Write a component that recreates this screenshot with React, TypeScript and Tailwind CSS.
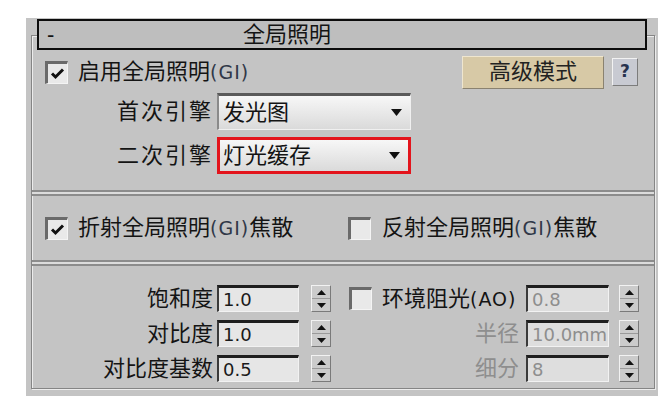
import React from "react";

const cjk = "font-['Liberation_Sans','Noto_Sans_CJK_SC',sans-serif]";
const num = "font-['DejaVu_Sans','Noto_Sans_CJK_SC',sans-serif]";

function CheckBox({ checked }: { checked?: boolean }) {
  return (
    <div className="w-[23px] h-[23px] shrink-0 bg-[#e9e9e9] border-t-[3px] border-l-[3px] border-t-[#6a6a6a] border-l-[#6a6a6a] border-b border-r border-b-[#f4f4f4] border-r-[#f4f4f4] flex items-center justify-center">
      {checked && (
        <svg width="15" height="13" viewBox="0 0 15 13">
          <path d="M2 6.5 L5.5 10 L13 2.5" fill="none" stroke="#111" strokeWidth="3" />
        </svg>
      )}
    </div>
  );
}

function Dropdown({ value, highlight }: { value: string; highlight?: boolean }) {
  return (
    <div
      className={`ml-[4px] w-[194px] h-[37px] flex items-center justify-between bg-gradient-to-b from-[#f7f7f7] to-[#dadada] ${
        highlight
          ? "border-[3px] border-[#e3141c] pl-[3px]"
          : "border-t-[3px] border-l-2 border-t-[#5a5a5a] border-l-[#8a8a8a] border-b border-r border-b-[#f0f0f0] border-r-[#f0f0f0] pl-[4px]"
      } pr-[8px]`}
    >
      <span className="text-[22px] leading-none">{value}</span>
      <svg width="11" height="7" viewBox="0 0 11 7">
        <path d="M0 0 H11 L5.5 7 Z" fill="#111" />
      </svg>
    </div>
  );
}

function Spinner() {
  return (
    <div className="w-[20px] h-[27px] shrink-0 bg-[#cbcbcb] border border-t-[#f2f2f2] border-l-[#f2f2f2] border-b-[#7a7a7a] border-r-[#7a7a7a] flex flex-col">
      <div className="flex-1 flex items-center justify-center border-b border-[#9a9a9a]">
        <svg width="9" height="5" viewBox="0 0 9 5">
          <path d="M0 5 H9 L4.5 0 Z" fill="#111" />
        </svg>
      </div>
      <div className="flex-1 flex items-center justify-center">
        <svg width="9" height="5" viewBox="0 0 9 5">
          <path d="M0 0 H9 L4.5 5 Z" fill="#111" />
        </svg>
      </div>
    </div>
  );
}

function NumField({ value, width, disabled }: { value: string; width: string; disabled?: boolean }) {
  return (
    <div
      className={`${width} h-[27px] flex items-center pl-[4px] border-t-[3px] border-l-2 border-t-[#1e1e1e] border-l-[#3a3a3a] border-b border-r border-b-[#f2f2f2] border-r-[#f2f2f2] ${
        disabled ? "bg-[#dedede] text-[#8e8e8e]" : "bg-[#e6e6e6] text-[#1a1a1a]"
      } ${num} text-[18px] leading-none`}
    >
      {value}
    </div>
  );
}

function Latin({ children, tint }: { children: React.ReactNode; tint?: boolean }) {
  return (
    <span className={`${num} text-[19px] tracking-[1px] ${tint ? "text-[#303848]" : ""}`}>{children}</span>
  );
}

function Separator() {
  return <div className="h-[6px] border-t-2 border-b-2 border-[#8c8c8c] bg-[#dcdcdc]" />;
}

export default function App() {
  return (
    <div className={`w-[665px] h-[408px] bg-white pt-[18px] pl-[26px] ${cjk} text-[#141414]`}>
      <div className="w-[632px] h-[378px] bg-[#c4c4c4] pt-[17px] pl-[5px] pr-[3px]">
        {/* Group frame */}
        <div className="h-[354px] border border-[#858585] shadow-[inset_1px_1px_0_#ececec,1px_1px_0_#ececec]">
          {/* Rollout title */}
          <div className="-mt-[17px] ml-[5px] mr-[7px] h-[31px] border-2 border-[#0c0c0c] bg-[#bebebe] flex items-center text-[22px] leading-none">
            <span className="w-[204px] pl-[8px]">-</span>
            <span>全局照明</span>
          </div>

          {/* Enable GI + buttons */}
          <div className="mt-[5px] h-[34px] flex items-center pl-[13px] pr-[16px]">
            <CheckBox checked />
            <span className="ml-[10px] text-[22px] leading-none">
              启用全局照明<Latin tint>(GI)</Latin>
            </span>
            <div className="ml-auto w-[142px] h-[33px] bg-[#d7c9a6] border border-t-[#efe6cf] border-l-[#efe6cf] border-b-[#8a8270] border-r-[#8a8270] flex items-center justify-center text-[22px] leading-none text-[#222]">
              高级模式
            </div>
            <div className={`ml-[8px] w-[26px] h-[28px] bg-[#c8cad2] border border-t-[#f2f2f2] border-l-[#f2f2f2] border-b-[#7c7c7c] border-r-[#7c7c7c] flex items-center justify-center ${num} text-[17px] font-bold text-[#27324e]`}>
              ?
            </div>
          </div>

          {/* Engines */}
          <div className="mt-[4px] h-[37px] flex items-center">
            <span className="w-[181px] text-right text-[22px] leading-none tracking-[2px]">首次引擎</span>
            <Dropdown value="发光图" />
          </div>
          <div className="mt-[7px] h-[37px] flex items-center">
            <span className="w-[181px] text-right text-[22px] leading-none tracking-[2px]">二次引擎</span>
            <Dropdown value="灯光缓存" highlight />
          </div>

          <div className="mt-[16px]">
            <Separator />
          </div>

          {/* Caustics */}
          <div className="mt-[20px] h-[24px] flex items-center pl-[13px]">
            <CheckBox checked />
            <span className="ml-[10px] w-[270px] text-[22px] leading-none">
              折射全局照明<Latin tint>(GI)</Latin>焦散
            </span>
            <CheckBox />
            <span className="ml-[11px] text-[22px] leading-none">
              反射全局照明<Latin tint>(GI)</Latin>焦散
            </span>
          </div>

          <div className="mt-[20px]">
            <Separator />
          </div>

          {/* Numeric parameters */}
          <div className="mt-[19px] flex flex-col gap-[8px]">
            <div className="h-[27px] flex items-center">
              <span className="w-[181px] text-right text-[22px] leading-none">饱和度</span>
              <div className="ml-[4px]"><NumField value="1.0" width="w-[82px]" /></div>
              <div className="ml-[12px]"><Spinner /></div>
              <div className="w-[188px] flex items-center pl-[18px]">
                <CheckBox />
                <span className="ml-[10px] text-[22px] leading-none">
                  环境阻光<Latin>(AO)</Latin>
                </span>
              </div>
              <div className="ml-[7px]"><NumField value="0.8" width="w-[83px]" disabled /></div>
              <div className="ml-[10px]"><Spinner /></div>
            </div>
            <div className="h-[27px] flex items-center">
              <span className="w-[181px] text-right text-[22px] leading-none">对比度</span>
              <div className="ml-[4px]"><NumField value="1.0" width="w-[82px]" /></div>
              <div className="ml-[12px]"><Spinner /></div>
              <span className="w-[188px] text-right text-[22px] leading-none text-[#8e8e8e]">半径</span>
              <div className="ml-[7px]"><NumField value="10.0mm" width="w-[83px]" disabled /></div>
              <div className="ml-[10px]"><Spinner /></div>
            </div>
            <div className="h-[27px] flex items-center">
              <span className="w-[181px] text-right text-[22px] leading-none">对比度基数</span>
              <div className="ml-[4px]"><NumField value="0.5" width="w-[82px]" /></div>
              <div className="ml-[12px]"><Spinner /></div>
              <span className="w-[188px] text-right text-[22px] leading-none text-[#8e8e8e]">细分</span>
              <div className="ml-[7px]"><NumField value="8" width="w-[83px]" disabled /></div>
              <div className="ml-[10px]"><Spinner /></div>
            </div>
          </div>
        </div>
      </div>
    </div>
  );
}
